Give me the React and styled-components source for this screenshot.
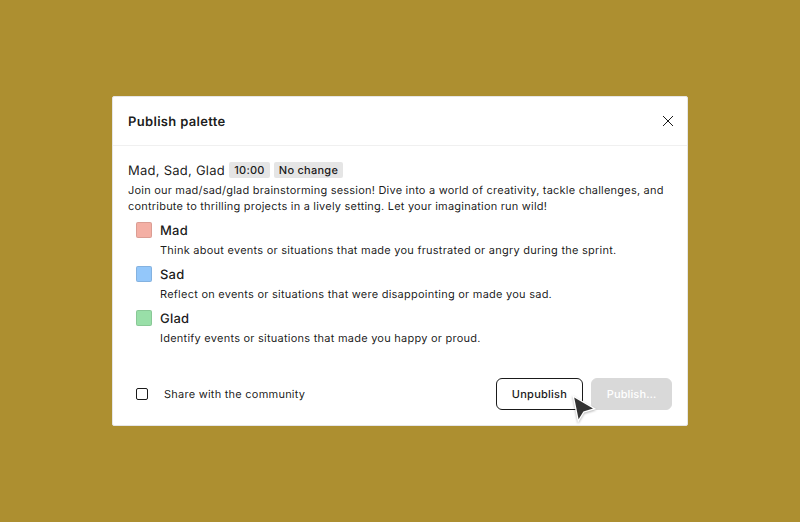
import React from "react";
import styled, { createGlobalStyle } from "styled-components";

const GlobalStyle = createGlobalStyle`
  * { box-sizing: border-box; }
  body {
    margin: 0;
    font-family: Inter, sans-serif;
    color: rgba(0, 0, 0, 0.9);
    text-rendering: geometricPrecision;
    -webkit-font-smoothing: antialiased;
  }
`;

const Page = styled.main`
  height: 100vh;
  display: flex;
  align-items: center;
  justify-content: center;
  background: #ad8f30;
`;

const Dialog = styled.section`
  width: 576px;
  height: 330px;
  display: flex;
  flex-direction: column;
  background: #fff;
  border: 1px solid #e6e6e6;
  border-radius: 2px;
`;

const Header = styled.header`
  height: 49px;
  flex: none;
  display: flex;
  align-items: center;
  justify-content: space-between;
  padding: 0 11px 0 15px;
  border-bottom: 1px solid #f0f0f0;
`;

const Title = styled.h1`
  margin: 0;
  padding-top: 2px;
  font-size: 13px;
  line-height: 24px;
  font-weight: 600;
  letter-spacing: 0.32px;
`;

const CloseButton = styled.button`
  display: flex;
  padding: 0;
  border: 0;
  background: none;
  color: #1a1a1a;
`;

const Content = styled.div`
  flex: 1;
  padding: 16px 15px 0;
`;

const Heading = styled.div`
  display: flex;
  align-items: center;
  gap: 4px;
  height: 16px;
  font-size: 13px;
  line-height: 18px;
  letter-spacing: 0.25px;
`;

const HeadingText = styled.span`
  width: 97px;
  padding-top: 2px;
  white-space: nowrap;
`;

const Tag = styled.span`
  width: ${({ $width }) => $width}px;
  height: 16px;
  border-radius: 2px;
  background: #e5e5e5;
  font-size: 11px;
  line-height: 16px;
  font-weight: 500;
  letter-spacing: 0.25px;
  text-align: center;
`;

const Description = styled.p`
  margin: 4px 0 0;
  font-size: 11px;
  line-height: 16px;
  letter-spacing: 0.21px;
  white-space: nowrap;
`;

const List = styled.ul`
  margin: 0;
  padding: 4px 8px;
  list-style: none;
`;

const Item = styled.li`
  display: grid;
  grid-template-columns: 16px 1fr;
  grid-template-rows: 24px 16px;
  column-gap: 8px;
  height: 44px;
`;

const Swatch = styled.span`
  width: 16px;
  height: 16px;
  margin-top: 4px;
  border: 1px solid rgba(0, 0, 0, 0.1);
  border-radius: 2px;
  background: ${({ $color }) => $color};
`;

const ItemName = styled.h2`
  margin: 0;
  font-size: 13px;
  line-height: 26px;
  font-weight: 500;
  letter-spacing: 0.2px;
`;

const ItemText = styled(Description)`
  margin: 0;
  grid-column: 2;
  letter-spacing: 0.24px;
`;

const Footer = styled.footer`
  display: flex;
  align-items: center;
  gap: 8px;
  padding: 0 15px 15px 23px;
`;

const CheckLabel = styled.label`
  display: flex;
  align-items: center;
  gap: 16px;
  margin-right: auto;
  font-size: 11px;
  letter-spacing: 0.24px;
`;

const Checkbox = styled.input`
  appearance: none;
  width: 12px;
  height: 12px;
  margin: 0;
  border: 1px solid #1a1a1a;
  border-radius: 2px;
`;

const Button = styled.button`
  position: relative;
  width: ${({ $width }) => $width}px;
  height: 32px;
  padding: 0;
  border: 1px solid ${({ disabled }) => (disabled ? "#d9d9d9" : "#1a1a1a")};
  border-radius: 6px;
  background: ${({ disabled }) => (disabled ? "#d9d9d9" : "#fff")};
  color: ${({ disabled }) => (disabled ? "#fff" : "#1a1a1a")};
  font: 500 11px Inter, sans-serif;
  letter-spacing: ${({ disabled }) => (disabled ? "0.12px" : "0.25px")};
  text-rendering: inherit;
`;

const Cursor = styled.svg`
  position: absolute;
  z-index: 1;
  left: 71px;
  top: 12px;
  filter: drop-shadow(0 1px 1px rgba(0, 0, 0, 0.3));
`;

const groups = [
  { name: "Mad", color: "#f4afa4", text: "Think about events or situations that made you frustrated or angry during the sprint." },
  { name: "Sad", color: "#93c7fa", text: "Reflect on events or situations that were disappointing or made you sad." },
  { name: "Glad", color: "#99dfa8", text: "Identify events or situations that made you happy or proud." },
];

export default function App() {
  return (
    <Page>
      <GlobalStyle />
      <Dialog role="dialog" aria-label="Publish palette">
        <Header>
          <Title>Publish palette</Title>
          <CloseButton aria-label="Close">
            <svg width="16" height="16" viewBox="0 0 16 16" stroke="currentColor">
              <path d="M3 3 13 13M13 3 3 13" />
            </svg>
          </CloseButton>
        </Header>
        <Content>
          <Heading>
            <HeadingText>Mad, Sad, Glad</HeadingText>
            <Tag $width={41}>10:00</Tag>
            <Tag $width={69}>No change</Tag>
          </Heading>
          <Description>
            Join our mad/sad/glad brainstorming session! Dive into a world of creativity, tackle challenges, and
            <br />
            contribute to thrilling projects in a lively setting. Let your imagination run wild!
          </Description>
          <List>
            {groups.map(({ name, color, text }) => (
              <Item key={name}>
                <Swatch $color={color} />
                <ItemName>{name}</ItemName>
                <ItemText>{text}</ItemText>
              </Item>
            ))}
          </List>
        </Content>
        <Footer>
          <CheckLabel>
            <Checkbox type="checkbox" />
            Share with the community
          </CheckLabel>
          <Button $width={87}>
            Unpublish
            <Cursor width="34" height="34" viewBox="0 0 34 34">
              <path
                d="M6.2 6.6 25 17.6 15.4 20.4 10.6 28.2Z"
                fill="#333"
                stroke="#fff"
                strokeWidth="2.6"
                paintOrder="stroke"
              />
            </Cursor>
          </Button>
          <Button $width={81} disabled>Publish…</Button>
        </Footer>
      </Dialog>
    </Page>
  );
}
